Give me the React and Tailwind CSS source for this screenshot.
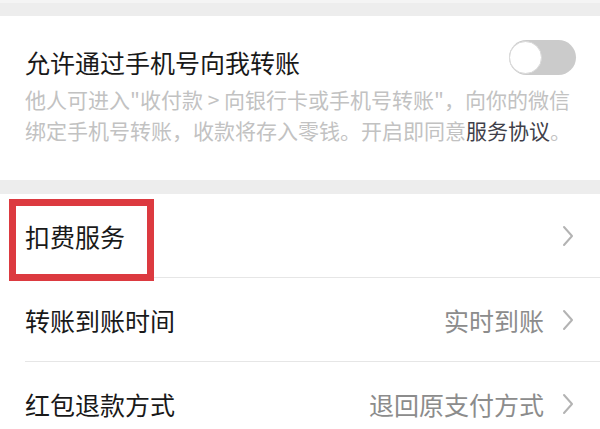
import React from "react";

const Chevron = () => (
  <svg width="12" height="22" viewBox="0 0 12 22" fill="none" className="shrink-0">
    <path d="M2 2 L10 11 L2 20" stroke="#b3b3b3" strokeWidth="2" strokeLinecap="round" strokeLinejoin="round" />
  </svg>
);

const Row = ({ label, value, divider, children }) => (
  <div className="relative h-[84px] flex items-center pl-[25px] pr-[26px]">
    <span className="text-[25px] leading-none text-[#191919]">{label}</span>
    <div className="ml-auto flex items-center gap-[18px]">
      {value && <span className="text-[25px] leading-none text-[#8c8c8c]">{value}</span>}
      <Chevron />
    </div>
    {divider && <div className="absolute left-[25px] right-0 bottom-0 h-px bg-[#e6e6e6]" />}
    {children}
  </div>
);

export default function App() {
  return (
    <div
      className="w-[600px] h-[429px] overflow-hidden bg-[#ededed]"
      style={{ fontFamily: '"Noto Sans CJK SC", "Noto Sans", sans-serif' }}
    >
      <div className="h-[16px] border-t-[3px] border-[#f4f4f4]" />
      <div className="bg-white h-[164px] pl-[25px] pr-[24px] pt-[24px]">
        <div className="flex items-start justify-between">
          <div className="mt-[4px] text-[25px] leading-[36px] text-[#191919]">允许通过手机号向我转账</div>
          <div className="relative w-[67px] h-[35px] rounded-full bg-[#cbcbcb]">
            <div className="absolute left-0 top-[1px] w-[33px] h-[33px] rounded-full bg-white border border-[#d9d9d9]" />
          </div>
        </div>
        <div className="mt-[4px] text-[21px] leading-[31px] text-[#c2c2c2] whitespace-nowrap">
          <div>他人可进入"收付款 &gt; 向银行卡或手机号转账"，向你的微信</div>
          <div>
            绑定手机号转账，收款将存入零钱。开启即同意<span className="text-[#3f3f4a]">服务协议</span>。
          </div>
        </div>
      </div>
      <div className="h-[14px]" />
      <div className="bg-white">
        <Row label="扣费服务" divider>
          <div className="absolute left-[9px] top-[5px] w-[145px] h-[82px] border-[7px] border-[#dc3a40]" />
        </Row>
        <Row label="转账到账时间" value="实时到账" divider />
        <Row label="红包退款方式" value="退回原支付方式" />
      </div>
    </div>
  );
}
